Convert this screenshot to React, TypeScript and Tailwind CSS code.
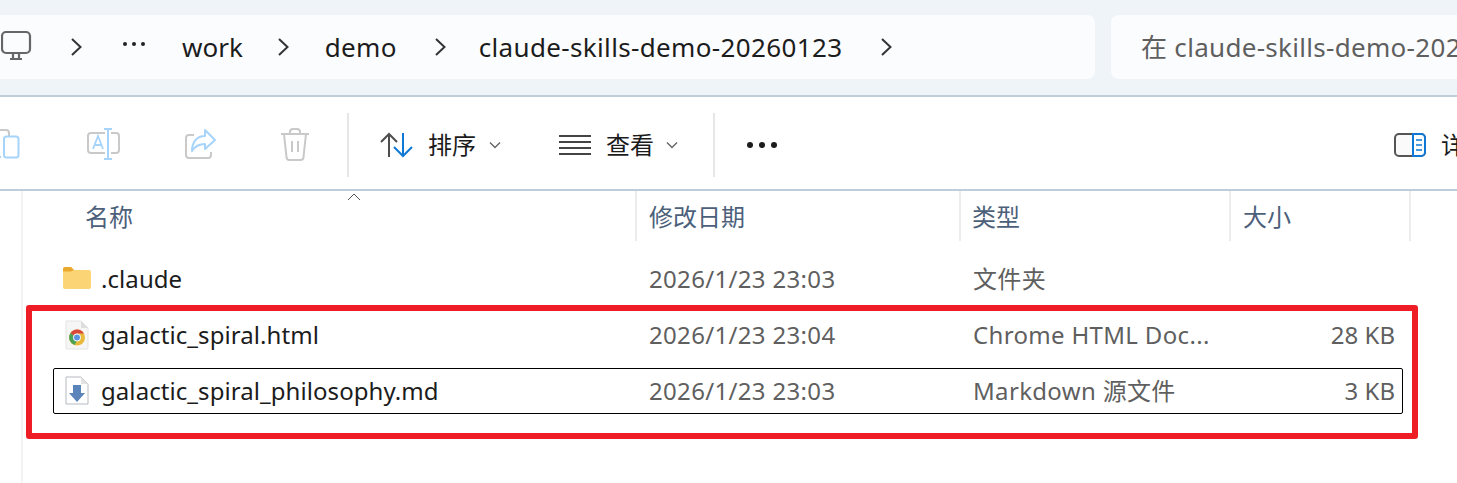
const font = "font-['Noto_Sans','Noto_Sans_CJK_SC',sans-serif]";

const Chevron = () => (
  <svg width="12" height="18" viewBox="0 0 12 18" fill="none" stroke="#333" strokeWidth="2" className="shrink-0">
    <path d="M2 1l8.500 8-8.500 8" />
  </svg>
);

const SmallChevron = () => (
  <svg width="12" height="8" viewBox="0 0 12 8" fill="none" stroke="#666" strokeWidth="1.4">
    <path d="M1 1.500l5 5 5-5" />
  </svg>
);

const FolderIcon = () => (
  <svg width="30" height="24" viewBox="0 0 30 24" className="ml-px mt-[-2px]">
    <path d="M1 3a2 2 0 0 1 2-2h6l3 3h15a2 2 0 0 1 2 2v15a2 2 0 0 1-2 2H3a2 2 0 0 1-2-2z" fill="#fbd475" />
    <path d="M1 3a2 2 0 0 1 2-2h6l3 3-3 1.500H1z" fill="#e9a92f" />
  </svg>
);

const ChromeFileIcon = () => (
  <svg width="24" height="30" viewBox="0 0 24 30" className="ml-1">
    <path d="M1 1h15l7 7v20a1 1 0 0 1-1 1H2a1 1 0 0 1-1-1z" fill="#f6f6f6" stroke="#e3e3e3" />
    <path d="M16 1v7h7z" fill="#dedede" />
    <circle cx="12" cy="17.500" r="8" fill="#e8b93a" />
    <path d="M12 9.500a8 8 0 0 1 7 4h-7a4 4 0 0 0-3.500 2L5.500 13A8 8 0 0 1 12 9.500z" fill="#d9483b" />
    <path d="M5.500 13A8 8 0 0 0 9.500 25l3-5a4 4 0 0 1-4-4.500z" fill="#4ca355" />
    <circle cx="12" cy="17.500" r="3.600" fill="#5c94e0" stroke="#fff" />
  </svg>
);

const MdFileIcon = () => (
  <svg width="24" height="30" viewBox="0 0 24 30" className="ml-1">
    <path d="M1 1h15l7 7v20H1z" fill="#fff" stroke="#b5b9c0" />
    <path d="M16 1v7h7z" fill="#e3e3e3" />
    <path d="M8 9h8v8h4l-8 9-8-9h4z" fill="#5b84bb" />
  </svg>
);

const ToolbarIcons = () => (
  <div className="flex items-center">
    <svg width="24" height="34" viewBox="0 0 24 34" fill="none" className="ml-[-2px] mt-[-2px]">
      <path d="M0 3h8a3 3 0 0 1 3 3v3" stroke="#c9c9c9" strokeWidth="2" />
      <rect x="6" y="9.500" width="14.500" height="21" rx="2.500" stroke="#a6d4fa" strokeWidth="2" />
      <path d="M0 30h3" stroke="#a6d4fa" strokeWidth="2" />
    </svg>
    <svg width="34" height="34" viewBox="0 0 34 34" fill="none" className="ml-[64px]">
      <path d="M19 5H5a3 3 0 0 0-3 3v14a3 3 0 0 0 3 3h14M25 5h5a3 3 0 0 1 3 3v14a3 3 0 0 1-3 3h-5" stroke="#c9c9c9" strokeWidth="2" />
      <path d="M18 1h8M22 1v30M18 31h8" stroke="#a6d4fa" strokeWidth="2" />
      <path d="M7 21l5-13 5 13M9 17h6" stroke="#a6d4fa" strokeWidth="1.800" />
    </svg>
    <svg width="32" height="32" viewBox="0 0 32 32" fill="none" className="ml-[65px]">
      <path d="M9 6H4a3 3 0 0 0-3 3v17a3 3 0 0 0 3 3h19a3 3 0 0 0 3-3v-3" stroke="#c9c9c9" strokeWidth="2" />
      <path d="M20 1l10 10-10 9v-5c-6 0-10 2-13 7 0-9 5-15 13-15z" stroke="#a6d4fa" strokeWidth="2" strokeLinejoin="round" />
    </svg>
    <svg width="30" height="34" viewBox="0 0 30 34" fill="none" className="ml-[63px]">
      <path d="M1 6h28M10 6V4a3 3 0 0 1 3-3h4a3 3 0 0 1 3 3v2M4 6l2.500 23a3 3 0 0 0 3 3h11a3 3 0 0 0 3-3L26 6M12 13v11M18 13v11" stroke="#c9c9c9" strokeWidth="2" />
    </svg>
  </div>
);

const rows = [
  { name: '.claude', date: '2026/1/23 23:03', type: '文件夹', size: '', icon: <FolderIcon /> },
  { name: 'galactic_spiral.html', date: '2026/1/23 23:04', type: 'Chrome HTML Doc...', size: '28 KB', icon: <ChromeFileIcon /> },
  { name: 'galactic_spiral_philosophy.md', date: '2026/1/23 23:03', type: 'Markdown 源文件', size: '3 KB', icon: <MdFileIcon />, selected: true },
];

export default function App() {
  return (
    <div className={`relative w-[1457px] h-[483px] overflow-hidden bg-white ${font}`}>
      {/* address bar */}
      <div className="flex h-[97px] gap-4 border-b-2 border-[#bfcddb] bg-[#eff4f9] pt-[15px]">
        <div className="flex h-16 w-[1095px] items-center rounded-r-lg bg-[#fbfcfe] text-[26px] tracking-[0.3px] text-[#1c1c1c]">
          <svg width="32" height="32" viewBox="0 0 32 32" fill="none" stroke="#666" strokeWidth="2.200" className="ml-px mt-[-2px]">
            <rect x="1" y="2" width="28" height="21" rx="4" />
            <path d="M9 29h12M12 24v4M18 24v4" />
          </svg>
          <div className="ml-[37px]"><Chevron /></div>
          <div className="ml-[41px] mt-[-6px] flex gap-[5px]">
            <span className="size-1 rounded-full bg-[#222]" />
            <span className="size-1 rounded-full bg-[#222]" />
            <span className="size-1 rounded-full bg-[#222]" />
          </div>
          <span className="ml-[37px] tracking-normal">work</span>
          <div className="ml-[34px]"><Chevron /></div>
          <span className="ml-[36px]">demo</span>
          <div className="ml-[37px]"><Chevron /></div>
          <span className="ml-[33px] tracking-[0.35px]">claude-skills-demo-20260123</span>
          <div className="ml-[38px]"><Chevron /></div>
        </div>
        <div className="flex h-16 flex-1 items-center overflow-hidden whitespace-nowrap rounded-l-lg bg-[#fbfcfe] pl-[30px] text-[26px] tracking-[0.3px] text-[#5f5f5f]">
          在 claude-skills-demo-20260123
        </div>
      </div>

      {/* command bar */}
      <div className="flex h-[94px] items-center border-b-2 border-[#bfcddb] pt-1 text-[#1c1c1c]">
        <div className="flex w-[347px] items-center pl-0"><ToolbarIcons /></div>
        <div className="h-[64px] w-0.5 bg-[#e6e6e6]" />
        <div className="ml-[31px] flex items-center">
          <svg width="34" height="26" viewBox="0 0 34 26" fill="none" strokeWidth="2">
            <path d="M9 25V2M1 10l8-8 8 8" stroke="#4d4d4d" />
            <path d="M23 1v23M14 15l9 9 9-9" stroke="#0f78d4" />
          </svg>
          <span className="ml-[14px] text-[24px] leading-none">排序</span>
          <div className="ml-[13px]"><SmallChevron /></div>
        </div>
        <div className="ml-[58px] flex items-center">
          <svg width="32" height="22" viewBox="0 0 32 22" fill="none" stroke="#444" strokeWidth="2">
            <path d="M0 2h32M0 8h32M0 14h32M0 20h32" />
          </svg>
          <span className="ml-[15px] text-[24px] leading-none">查看</span>
          <div className="ml-[12px]"><SmallChevron /></div>
        </div>
        <div className="ml-[35px] h-[64px] w-0.5 bg-[#e6e6e6]" />
        <div className="ml-[32px] flex gap-[6px]">
          <span className="size-[6px] rounded-full bg-[#1c1c1c]" />
          <span className="size-[6px] rounded-full bg-[#1c1c1c]" />
          <span className="size-[6px] rounded-full bg-[#1c1c1c]" />
        </div>
        <div className="ml-auto flex items-center">
          <svg width="32" height="24" viewBox="0 0 32 24" fill="none">
            <rect x="1" y="1" width="30" height="22" rx="4" fill="#fafafa" stroke="#555" strokeWidth="2" />
            <path d="M19 1h8a4 4 0 0 1 4 4v14a4 4 0 0 1-4 4h-8z" fill="#fff" stroke="#0f78d4" strokeWidth="2" />
            <path d="M22 7h6M22 12h6M22 17h6" stroke="#0f78d4" strokeWidth="1.600" />
          </svg>
          <span className="ml-[15px] w-[16px] overflow-hidden whitespace-nowrap text-[24px] leading-none">详细信息</span>
        </div>
      </div>

      {/* file list */}
      <div className="relative h-[293px] ml-[21px] border-l-2 border-[#f3f3f3]">
        <svg width="14" height="8" viewBox="0 0 14 8" fill="none" stroke="#555" className="absolute left-[324px] top-[2px]">
          <path d="M1 7l6-6 6 6" />
        </svg>
        <div className="flex h-[50px] items-center text-[24px] leading-[52px] text-[#4c607a]">
          <div className="h-full w-[612px] pl-[62px]">名称</div>
          <div className="h-full w-[324px] border-l-2 border-[#ececec] pl-[12px]">修改日期</div>
          <div className="h-full w-[270px] border-l-2 border-[#ececec] pl-[11px]">类型</div>
          <div className="h-full w-[182px] border-x-2 border-[#ececec] pl-[12px]">大小</div>
        </div>
        <div className="mt-[15px] flex flex-col gap-[10px] pl-[30px]">
          {rows.map((row) => (
            <div
              key={row.name}
              className={`flex h-[46px] w-[1350px] items-center rounded-[2px] border text-[24px] ${
                row.selected ? 'border-black' : 'border-transparent'
              }`}
            >
              <div className="flex w-[7px] shrink-0" />
              <div className="flex w-[40px] shrink-0 items-center justify-start">{row.icon}</div>
              <div className="w-[548px] shrink-0 tracking-[0.07px] text-[#1c1c1c]">{row.name}</div>
              <div className="w-[324px] shrink-0 tracking-[0.33px] text-[#5f5f5f]">{row.date}</div>
              <div className="w-[270px] shrink-0 whitespace-nowrap tracking-[0.33px] text-[#5f5f5f]">{row.type}</div>
              <div className="w-[152px] shrink-0 text-right text-[#5f5f5f]">{row.size}</div>
            </div>
          ))}
        </div>
      </div>

      {/* red annotation frame */}
      <div className="absolute left-[26px] top-[305px] h-[134px] w-[1392px] rounded-[3px] border-[6px] border-[#ee1c25]" />
    </div>
  );
}
